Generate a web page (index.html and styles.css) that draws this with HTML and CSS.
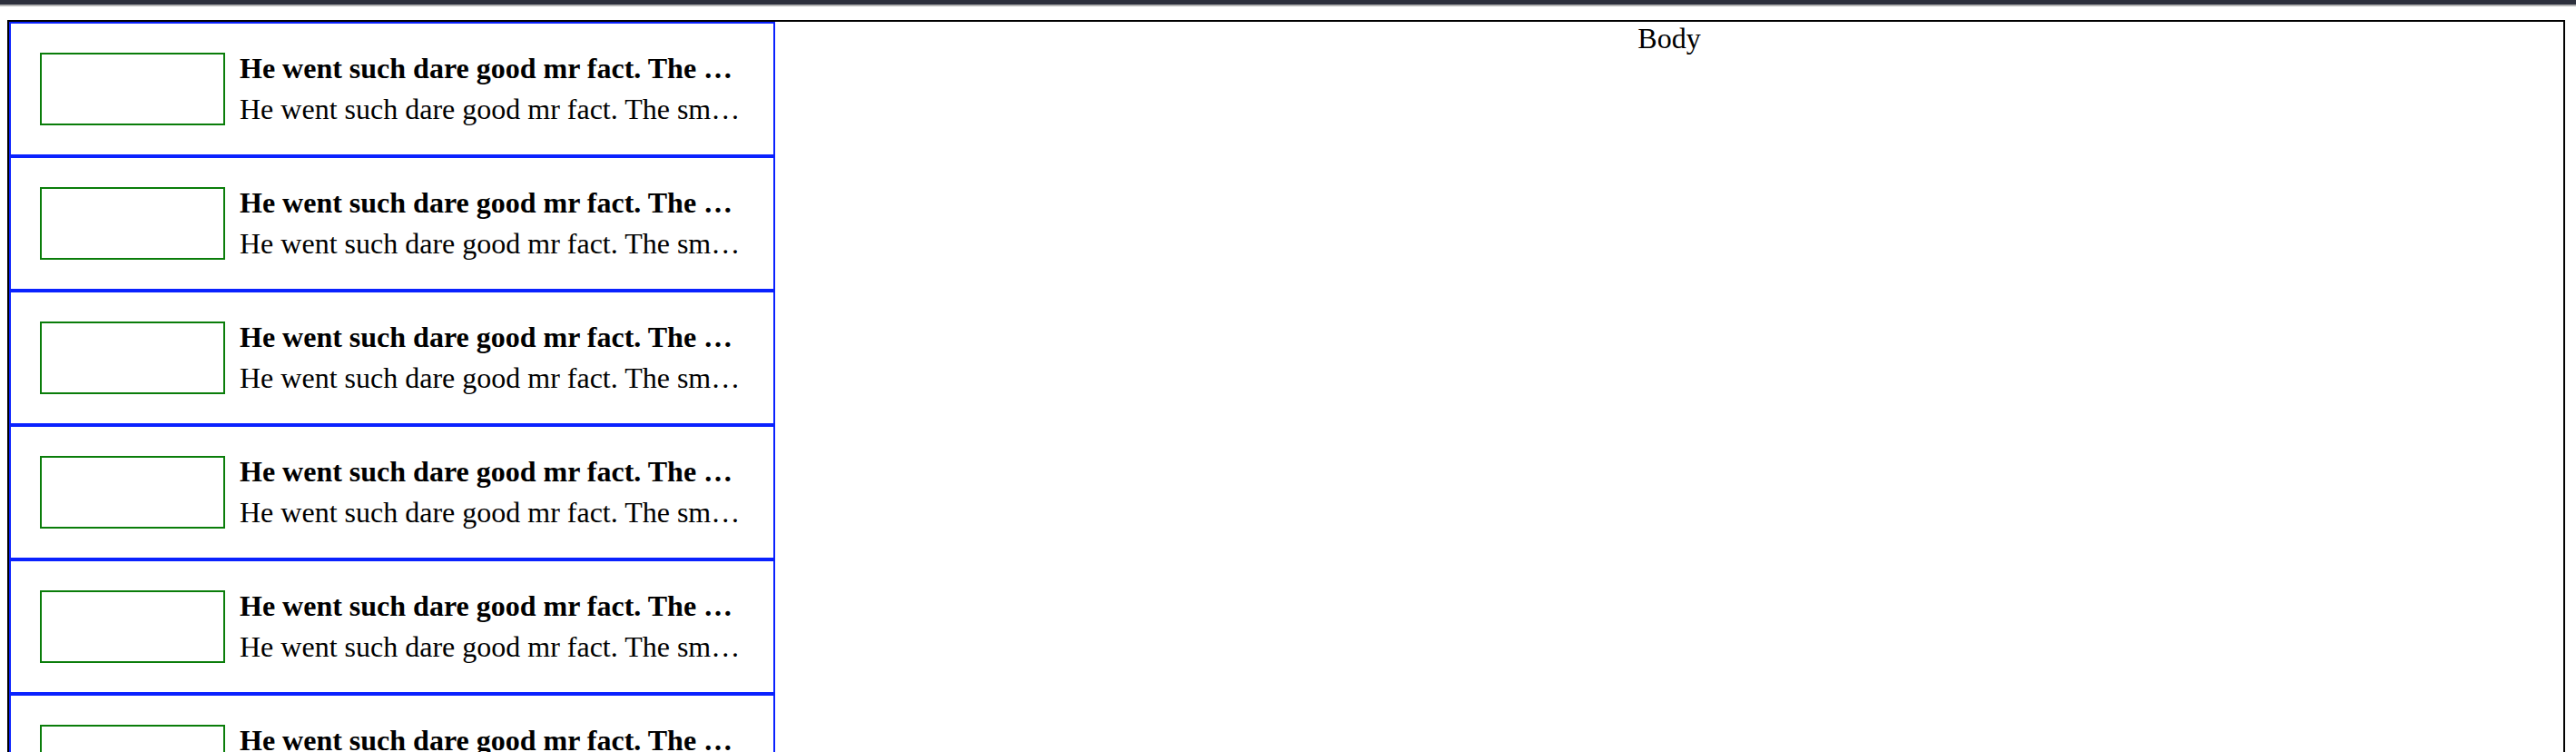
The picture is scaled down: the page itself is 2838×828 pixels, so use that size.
FILE: index.html
```html
<!DOCTYPE html>
<html>
<head>
<meta charset="utf-8">
<link rel="stylesheet" href="styles.css">
</head>
<body>
<div class="topbar"></div>
<div class="page">
  <div class="frame">
    <div class="sidebar">
      <div class="item"><div class="thumb"></div><div class="text"><div class="title">He went such dare good mr fact. The small own seven saved man age.</div><div class="desc">He went such dare good mr fact. The small own seven saved man age.</div></div></div>
      <div class="item"><div class="thumb"></div><div class="text"><div class="title">He went such dare good mr fact. The small own seven saved man age.</div><div class="desc">He went such dare good mr fact. The small own seven saved man age.</div></div></div>
      <div class="item"><div class="thumb"></div><div class="text"><div class="title">He went such dare good mr fact. The small own seven saved man age.</div><div class="desc">He went such dare good mr fact. The small own seven saved man age.</div></div></div>
      <div class="item"><div class="thumb"></div><div class="text"><div class="title">He went such dare good mr fact. The small own seven saved man age.</div><div class="desc">He went such dare good mr fact. The small own seven saved man age.</div></div></div>
      <div class="item"><div class="thumb"></div><div class="text"><div class="title">He went such dare good mr fact. The small own seven saved man age.</div><div class="desc">He went such dare good mr fact. The small own seven saved man age.</div></div></div>
      <div class="item"><div class="thumb"></div><div class="text"><div class="title">He went such dare good mr fact. The small own seven saved man age.</div><div class="desc">He went such dare good mr fact. The small own seven saved man age.</div></div></div>
    </div>
    <div class="main">Body</div>
  </div>
</div>
</body>
</html>
```

FILE: styles.css
```css
html, body {
  margin: 0;
  padding: 0;
  height: 100%;
  overflow: hidden;
  background: #ffffff;
}

body {
  font-family: "Liberation Serif", "Times New Roman", serif;
  font-size: 32px;
  color: #000000;
}

.topbar {
  height: 5px;
  background: #2d303d;
  border-bottom: 2px solid #b4b4b4;
}

.page {
  padding: 15px 12px 0 8px;
}

.frame {
  display: flex;
  border: 2px solid #000000;
  align-items: flex-start;
}

.sidebar {
  width: 844px;
  flex: 0 0 844px;
  display: flex;
  flex-direction: column;
}

.item {
  display: flex;
  align-items: center;
  gap: 16px;
  height: 148px;
  box-sizing: border-box;
  padding: 0 34px 0 32px;
  border: 2px solid #0a22ff;
}

.thumb {
  flex: 0 0 auto;
  width: 200px;
  height: 76px;
  border: 2px solid #0a7d0a;
}

.text {
  flex: 1 1 auto;
  min-width: 0;
  display: flex;
  flex-direction: column;
  gap: 8px;
}

.title,
.desc {
  white-space: nowrap;
  overflow: hidden;
  text-overflow: ellipsis;
  line-height: 37px;
}

.title {
  font-weight: bold;
}

.main {
  flex: 1 1 auto;
  text-align: center;
  line-height: 37px;
}
```
